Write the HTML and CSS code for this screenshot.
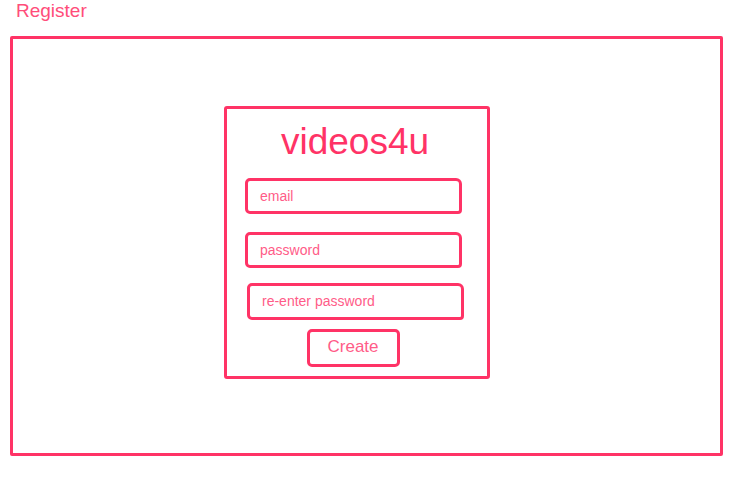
FILE: index.html
```html
<!DOCTYPE html>
<html lang="en">
<head>
    <meta charset="UTF-8">
    <meta name="viewport" content="width=device-width, initial-scale=1.0">
    <title>Register - videos4u</title>
    <link rel="stylesheet" href="styles.css">
</head>
<body>

    <div class="page-title">Register</div>

    <!-- Screen frame -->
    <div class="frame">
        <div class="card">
            <h1 class="brand">videos4u</h1>
            <div class="field">email</div>
            <div class="field">password</div>
            <div class="field field-shift">re-enter password</div>
            <div class="actions">
                <div class="button">Create</div>
            </div>
        </div>
    </div>

</body>
</html>
```

FILE: styles.css
```css
body {
    font-family: "Liberation Sans", Arial, sans-serif;
    margin: 0;
    background-color: #fff;
    color: #ff3366;
}
.page-title {
    height: 36px;
    padding-left: 16px;
    font-size: 19px;
    line-height: 22px;
    color: #ff4d7a;
}
.frame {
    box-sizing: border-box;
    width: 713px;
    height: 420px;
    margin-left: 10px;
    border: 3px solid #ff3366;
    border-radius: 2px;
    padding: 67px 0 0 211px;
}
.card {
    box-sizing: border-box;
    width: 266px;
    height: 273px;
    border: 3px solid #ff3366;
    border-radius: 3px;
    padding: 11px 0 0 18px;
}
.brand {
    margin: 0 0 14px 0;
    width: 220px;
    text-align: center;
    font-size: 37px;
    font-weight: normal;
    line-height: 44px;
    color: #ff3366;
}
.field {
    box-sizing: border-box;
    width: 217px;
    height: 36px;
    margin-bottom: 18px;
    border: 3px solid #ff3366;
    border-radius: 5px 6px 4px 5px;
    padding-left: 12px;
    font-size: 14px;
    line-height: 30px;
    color: #ff5c88;
}
.field-shift {
    height: 37px;
    margin-top: -3px;
    margin-left: 2px;
    margin-bottom: 9px;
}
.actions {
    width: 217px;
    display: flex;
    justify-content: center;
}
.button {
    box-sizing: border-box;
    width: 93px;
    height: 38px;
    border: 3px solid #ff3366;
    border-radius: 5px;
    text-align: center;
    font-size: 17px;
    line-height: 30px;
    color: #ff5c88;
    margin-right: 1px;
}
```
